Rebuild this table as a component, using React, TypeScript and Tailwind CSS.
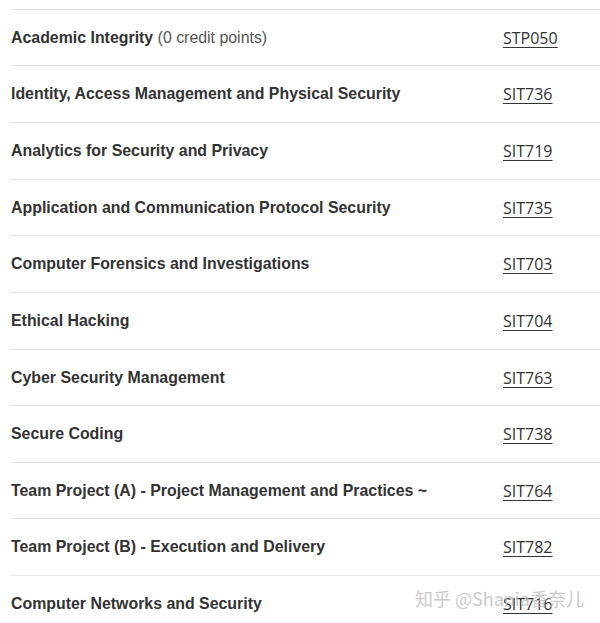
const units: { title: string; note?: string; code: string; h: string }[] = [
  { title: "Academic Integrity", note: "(0 credit points)", code: "STP050", h: "h-[56px]" },
  { title: "Identity, Access Management and Physical Security", code: "SIT736", h: "h-[57px]" },
  { title: "Analytics for Security and Privacy", code: "SIT719", h: "h-[57px]" },
  { title: "Application and Communication Protocol Security", code: "SIT735", h: "h-[56px]" },
  { title: "Computer Forensics and Investigations", code: "SIT703", h: "h-[57px]" },
  { title: "Ethical Hacking", code: "SIT704", h: "h-[57px]" },
  { title: "Cyber Security Management", code: "SIT763", h: "h-[56px]" },
  { title: "Secure Coding", code: "SIT738", h: "h-[57px]" },
  { title: "Team Project (A) - Project Management and Practices ~", code: "SIT764", h: "h-[56px]" },
  { title: "Team Project (B) - Execution and Delivery", code: "SIT782", h: "h-[57px]" },
  { title: "Computer Networks and Security", code: "SIT716", h: "h-[56px]" },
]

export default function App() {
  return (
    <div className="relative w-[600px] h-[623px] overflow-hidden bg-white pt-[9px]">
      {/* list */}
      <div className="ml-[11px]">
        {units.map((u) => (
          <div
            key={u.code}
            className={`${u.h} border-t border-[#e6e6e6] flex items-center`}
          >
            <div className="w-[492px] text-[15.9px] text-[#333] font-['Liberation_Sans',Arial,sans-serif]">
              <span className="font-bold">{u.title}</span>
              {u.note && <span className="text-[#555]"> {u.note}</span>}
            </div>
            <a className="text-[16px] text-[#333] underline underline-offset-[3px] font-['Open_Sans',sans-serif]">
              {u.code}
            </a>
          </div>
        ))}
      </div>

      {/* watermark */}
      <div className="absolute left-[415px] top-[585px] text-[18px] text-[#bbbbbb]/80 font-['Noto_Sans_CJK_SC',sans-serif] pointer-events-none">
        知乎 @Shania香奈儿
      </div>
    </div>
  )
}
